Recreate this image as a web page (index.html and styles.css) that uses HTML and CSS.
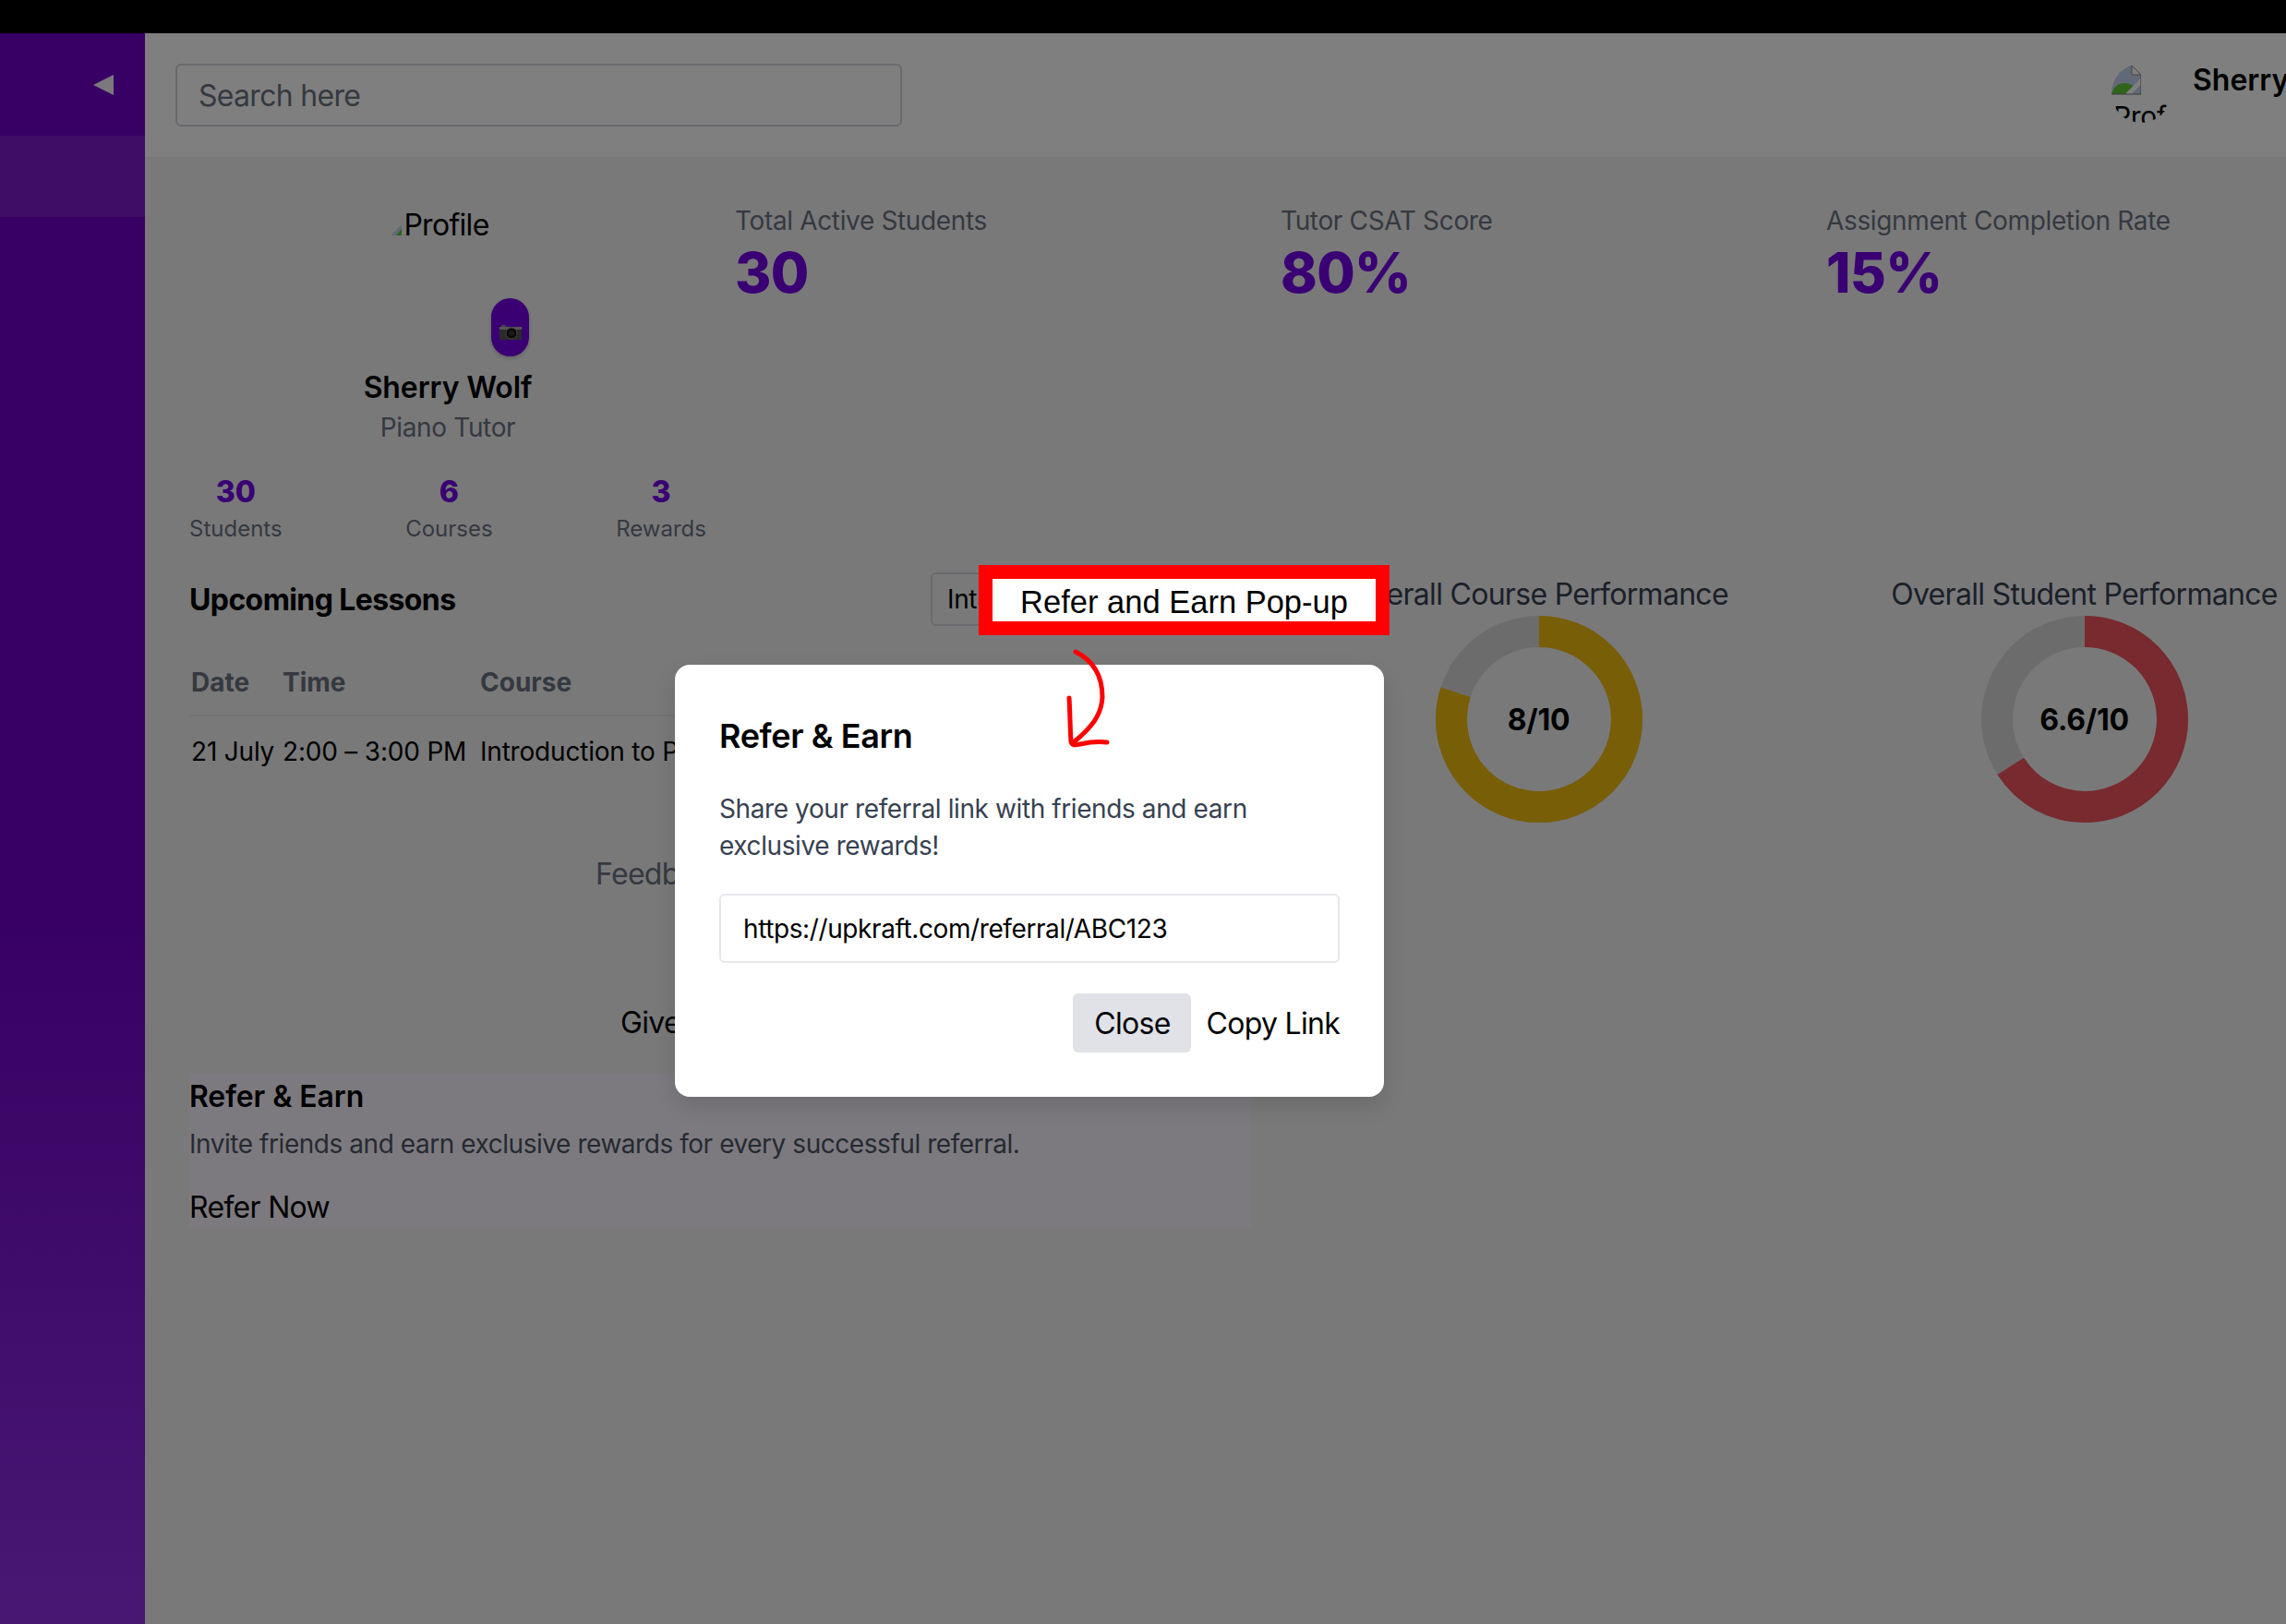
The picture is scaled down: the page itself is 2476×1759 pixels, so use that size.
FILE: index.html
```html
<!DOCTYPE html>
<html>
<head>
    <meta charset="UTF-8">
    <title>Tutor Dashboard</title>
    <link rel="stylesheet" href="styles.css">
</head>
<body>
    <div class="app">
        <aside class="sidebar">
            <div class="side-top"><span class="side-toggle"></span></div>
            <div class="side-active"></div>
        </aside>
        <div class="main">
            <header class="topbar">
                <input class="search" type="text" placeholder="Search here">
                <div class="user">
                    <div class="user-pic">
                        <svg class="broken" viewBox="0 0 32 32">
                            <path d="M0 31V0h22l10 10v21z" fill="#c2d0ee"/>
                            <path d="M0 31C2 23 8 19 14 19C19 19 23 21 26 24L19 31z" fill="#5fc832"/>
                            <path d="M17 32L33 16" stroke="#fff" stroke-width="5"/>
                            <path d="M0 31h32M32 10v21" stroke="#777" stroke-width="1" fill="none"/>
                            <path d="M22 0v10h10z" fill="#fff" stroke="#888" stroke-width="1"/>
                        </svg>
                        <span>Profile</span>
                    </div>
                    <span class="user-name">Sherry Wolf</span>
                </div>
            </header>
            <main class="content">
                <section class="top-row">
                    <div class="profile">
                        <div class="photo">
                            <span class="photo-alt">
                                <svg class="photo-broken" viewBox="0 0 11 11"><path d="M11 0v11H0z" fill="#5fc832"/><path d="M11 0v4L5 11H0z" fill="#c5d3ee"/></svg>Profile
                            </span>
                            <button class="cam" type="button">
                                <svg viewBox="0 0 24 16" width="24" height="16">
                                    <rect y="2" width="24" height="14" fill="#555"/>
                                    <rect y="2" width="24" height="3" fill="#aaa"/>
                                    <rect x="2" width="5" height="2" fill="#888"/>
                                    <circle cx="13" cy="9" r="6" fill="#111" stroke="#888" stroke-width="1"/>
                                    <circle cx="13" cy="9" r="3" fill="#333"/>
                                </svg>
                            </button>
                        </div>
                        <div class="profile-name">Sherry Wolf</div>
                        <div class="profile-role">Piano Tutor</div>
                        <div class="profile-stats">
                            <div class="pstat"><b>30</b><span>Students</span></div>
                            <div class="pstat"><b>6</b><span>Courses</span></div>
                            <div class="pstat"><b>3</b><span>Rewards</span></div>
                        </div>
                    </div>
                    <div class="stat"><div class="stat-label">Total Active Students</div><div class="stat-value">30</div></div>
                    <div class="stat"><div class="stat-label">Tutor CSAT Score</div><div class="stat-value">80%</div></div>
                    <div class="stat"><div class="stat-label">Assignment Completion Rate</div><div class="stat-value">15%</div></div>
                </section>
                <section class="bottom-row">
                    <div class="lessons">
                        <div class="lessons-head">
                            <h2>Upcoming Lessons</h2>
                            <button class="filter" type="button">Introduction to Piano</button>
                        </div>
                        <table class="lesson-table">
                            <tr><th class="c-date">Date</th><th class="c-time">Time</th><th>Course</th></tr>
                            <tr><td>21 July</td><td>2:00 – 3:00 PM</td><td>Introduction to Piano</td></tr>
                        </table>
                        <div class="feedback-label">Feedback</div>
                        <div class="feedback-link">Give Feedback</div>
                        <div class="refer-card">
                            <h3>Refer &amp; Earn</h3>
                            <p>Invite friends and earn exclusive rewards for every successful referral.</p>
                            <button class="refer-now" type="button">Refer Now</button>
                        </div>
                    </div>
                    <div class="chart">
                        <div class="chart-title">Overall Course Performance</div>
                        <div class="donut">
                            <svg viewBox="0 0 224 224" width="224" height="224">
                                <circle class="track" cx="112" cy="112" r="95"/>
                                <circle class="arc-gold" cx="112" cy="112" r="95" pathLength="100" stroke-dasharray="80 100"/>
                            </svg>
                            <span>8/10</span>
                        </div>
                    </div>
                    <div class="chart">
                        <div class="chart-title">Overall Student Performance</div>
                        <div class="donut">
                            <svg viewBox="0 0 224 224" width="224" height="224">
                                <circle class="track" cx="112" cy="112" r="95"/>
                                <circle class="arc-red" cx="112" cy="112" r="95" pathLength="100" stroke-dasharray="66 100"/>
                            </svg>
                            <span>6.6/10</span>
                        </div>
                    </div>
                </section>
            </main>
        </div>
    </div>

    <div class="overlay"></div>

    <div class="modal">
        <h2>Refer &amp; Earn</h2>
        <p>Share your referral link with friends and earn exclusive rewards!</p>
        <input class="link-input" type="text" value="https://upkraft.com/referral/ABC123">
        <div class="modal-actions">
            <button class="btn-close" type="button">Close</button>
            <button class="btn-copy" type="button">Copy Link</button>
        </div>
    </div>

    <!-- annotation drawn on top of the screenshot -->
    <div class="note">Refer and Earn Pop-up</div>
    <svg class="note-arrow" viewBox="0 0 60 120" width="60" height="120">
        <path d="M12 6C34 17 41 36 41 55C40 75 29 88 11 103M5 56C6 72 6 88 7 103C8 108 12 107 17 106C26 104 36 103 46 104" fill="none" stroke="#ff0000" stroke-width="5" stroke-linecap="round" stroke-linejoin="round"/>
    </svg>
</body>
</html>
```

FILE: styles.css
```css
html, body {
    margin: 0;
    height: 1759px;
    overflow: hidden;
}
body {
    background-color: #000;
    font-family: Inter, "Liberation Sans", sans-serif;
    font-size: 28px;
    letter-spacing: -.35px;
    color: #000;
    position: relative;
}
button {
    font-family: inherit;
    font-size: 32px;
    letter-spacing: -.7px;
    background: none;
    border: none;
    padding: 0;
    color: inherit;
}
h2, h3, p {
    margin: 0;
}

.app {
    display: flex;
    width: 2700px;
    height: 1723px;
    margin-top: 36px;
    position: absolute;
    top: 0;
    left: 0;
}

/* sidebar */
.sidebar {
    width: 157px;
    flex: none;
    background: linear-gradient(180deg, #7000c8 0%, #7000c8 55%, #9030e6 100%);
}
.side-top {
    height: 111px;
    display: flex;
    justify-content: flex-end;
    padding: 45px 34px 0 0;
    box-sizing: border-box;
}
.side-toggle {
    width: 0;
    height: 0;
    border-top: 11px solid transparent;
    border-bottom: 11px solid transparent;
    border-right: 22px solid #fff;
    opacity: .95;
}
.side-active {
    height: 88px;
    background: rgba(255, 255, 255, .1);
}

/* top bar */
.main {
    flex: 1;
    background-color: #f2f3f4;
}
.topbar {
    height: 135px;
    background-color: #fff;
    border-bottom: 1px solid #eee;
    box-sizing: border-box;
    display: flex;
    align-items: flex-start;
    padding: 33px 0 0 33px;
}
.search {
    width: 787px;
    height: 68px;
    box-sizing: border-box;
    border: 2px solid #d1d5db;
    border-radius: 6px;
    padding: 0 23px;
    font-family: inherit;
    font-size: 32px;
    letter-spacing: -.7px;
    background: transparent;
}
.search::placeholder {
    color: #6b7280;
}
.user {
    display: flex;
    align-items: flex-start;
    margin-left: 1310px;
}
.user-pic {
    width: 64px;
    height: 64px;
    border-radius: 50%;
    overflow: hidden;
    line-height: 30px;
    font-size: 30px;
}
.broken {
    display: block;
    width: 32px;
    height: 32px;
    margin-top: 2px;
}
.user-pic span {
    display: block;
    margin: 8px 0 0 2px;
}
.user-name {
    font-size: 32px;
    font-weight: 600;
    letter-spacing: 0;
    margin-left: 24px;
    line-height: 36px;
}

/* page content */
.content {
    padding: 54px 0 0 48px;
}
.top-row {
    display: grid;
    grid-template-columns: repeat(4, 560px);
    column-gap: 31px;
}
.profile {
    text-align: center;
}
.photo {
    width: 160px;
    height: 160px;
    margin: 0 auto;
    position: relative;
}
.photo-alt {
    display: block;
    font-size: 32px;
    letter-spacing: -.7px;
    line-height: 36px;
    white-space: nowrap;
    padding-top: 1px;
    margin: 0 8px 0 -8px;
    text-align: center;
}
.photo-broken {
    width: 11px;
    height: 11px;
    margin-right: 2px;
}
.cam {
    position: absolute;
    right: -8px;
    top: 98px;
    width: 41px;
    height: 63px;
    border-radius: 21px;
    background-color: #7400e6;
    box-shadow: 0 2px 4px rgba(0, 0, 0, .2);
    display: flex;
    align-items: flex-end;
    justify-content: center;
    padding-bottom: 18px;
    box-sizing: border-box;
}
.profile-name {
    font-size: 32px;
    font-weight: 600;
    letter-spacing: -.1px;
    line-height: 40px;
    margin-top: 15px;
}
.profile-role {
    color: #6b7280;
    line-height: 34px;
    margin-top: 6px;
}
.profile-stats {
    display: flex;
    justify-content: space-between;
    margin-top: 34px;
}
.pstat {
    display: flex;
    flex-direction: column;
    align-items: center;
}
.pstat b {
    font-size: 32px;
    font-weight: 800;
    letter-spacing: 0;
    line-height: 38px;
    color: #7400e6;
}
.pstat span {
    font-size: 24px;
    letter-spacing: 0;
    line-height: 32px;
    color: #6b7280;
    margin-top: 5px;
}
.stat-label {
    color: #6b7280;
    font-size: 28px;
    line-height: 32px;
    margin-top: -2px;
}
.stat-value {
    font-size: 60px;
    font-weight: 800;
    letter-spacing: -.7px;
    line-height: 72px;
    color: #7400e6;
    margin-top: 4px;
}

.bottom-row {
    display: flex;
    margin-top: 31px;
}
.lessons {
    width: 1150px;
    flex: none;
}
.lessons-head {
    display: flex;
    justify-content: space-between;
    align-items: center;
}
.lessons-head h2 {
    font-size: 32px;
    font-weight: 700;
    letter-spacing: -.6px;
}
.filter {
    width: 347px;
    height: 58px;
    text-align: left;
    padding-left: 16px;
    font-size: 28px;
    letter-spacing: -.35px;
    border: 2px solid #d1d5db;
    border-radius: 6px;
    box-sizing: border-box;
}
.lesson-table {
    border-collapse: collapse;
    width: 100%;
    margin-top: 44px;
    text-align: left;
}
.lesson-table th {
    font-size: 28px;
    font-weight: 700;
    letter-spacing: 0;
    color: #6b7280;
    padding: 0 2px 18px;
    border-bottom: 2px solid #e5e7eb;
}
.lesson-table td {
    padding: 21px 2px;
    white-space: nowrap;
    letter-spacing: -.2px;
}
.c-date {
    width: 95px;
}
.c-time {
    width: 210px;
}
.feedback-label {
    font-size: 32px;
    letter-spacing: -.7px;
    color: #6b7280;
    margin: 75px 0 0 440px;
}
.feedback-link {
    font-size: 32px;
    letter-spacing: -.7px;
    margin: 122px 0 0 467px;
}
.refer-card {
    height: 168px;
    margin-top: 36px;
    background-color: #faf5ff;
}
.refer-card h3 {
    font-size: 32px;
    font-weight: 600;
    letter-spacing: -.1px;
    line-height: 40px;
    padding-top: 5px;
}
.refer-card p {
    color: #4b5563;
    letter-spacing: -.45px;
    line-height: 34px;
    margin-top: 14px;
}
.refer-now {
    display: block;
    margin-top: 32px;
}

/* charts */
.chart {
    width: 591px;
    flex: none;
    margin-left: 16px;
    margin-top: 5px;
    display: flex;
    flex-direction: column;
    align-items: center;
}
.chart + .chart {
    margin-left: 0;
}
.chart-title {
    font-size: 32px;
    letter-spacing: -.7px;
    color: #374151;
    white-space: nowrap;
    line-height: 38px;
}
.donut {
    display: grid;
    margin-top: 4px;
}
.donut svg, .donut span {
    grid-area: 1 / 1;
}
.donut span {
    place-self: center;
    font-size: 32px;
    font-weight: 700;
    letter-spacing: -.3px;
}
.donut circle {
    fill: none;
    stroke-width: 34;
}
.track {
    stroke: #d9d9db;
}
.arc-gold, .arc-red {
    transform: rotate(-90deg);
    transform-origin: center;
}
.arc-gold {
    stroke: #f0bc0c;
}
.arc-red {
    stroke: #f0555c;
}

/* modal */
.overlay {
    position: absolute;
    top: 36px;
    left: 0;
    right: 0;
    bottom: 0;
    background: rgba(0, 0, 0, .5);
}
.modal {
    position: absolute;
    left: 731px;
    top: 720px;
    width: 768px;
    height: 468px;
    box-sizing: border-box;
    padding: 54px 48px 0 48px;
    background-color: #fff;
    border-radius: 16px;
    box-shadow: 0 10px 24px rgba(0, 0, 0, .12);
}
.modal h2 {
    font-size: 36px;
    font-weight: 600;
    letter-spacing: -.4px;
    line-height: 46px;
}
.modal p {
    color: #374151;
    letter-spacing: -.4px;
    line-height: 40px;
    margin-top: 36px;
}
.link-input {
    display: block;
    width: 100%;
    height: 75px;
    box-sizing: border-box;
    margin-top: 32px;
    padding: 0 24px;
    border: 2px solid #e5e7eb;
    border-radius: 6px;
    font-family: inherit;
    font-size: 28px;
    letter-spacing: -.4px;
    color: #000;
}
.modal-actions {
    display: flex;
    justify-content: flex-end;
    align-items: center;
    gap: 16px;
    margin-top: 33px;
}
.btn-close {
    width: 128px;
    height: 64px;
    background-color: #e0e2e8;
    border-radius: 6px;
}

/* annotation */
.note {
    position: absolute;
    left: 1060px;
    top: 612px;
    width: 445px;
    height: 76px;
    box-sizing: border-box;
    border: 15px solid #ff0000;
    background-color: #fff;
    text-align: center;
    font-family: "Liberation Sans", sans-serif;
    font-size: 34.5px;
    letter-spacing: 0;
    line-height: 50px;
}
.note-arrow {
    position: absolute;
    left: 1153px;
    top: 700px;
}
```
